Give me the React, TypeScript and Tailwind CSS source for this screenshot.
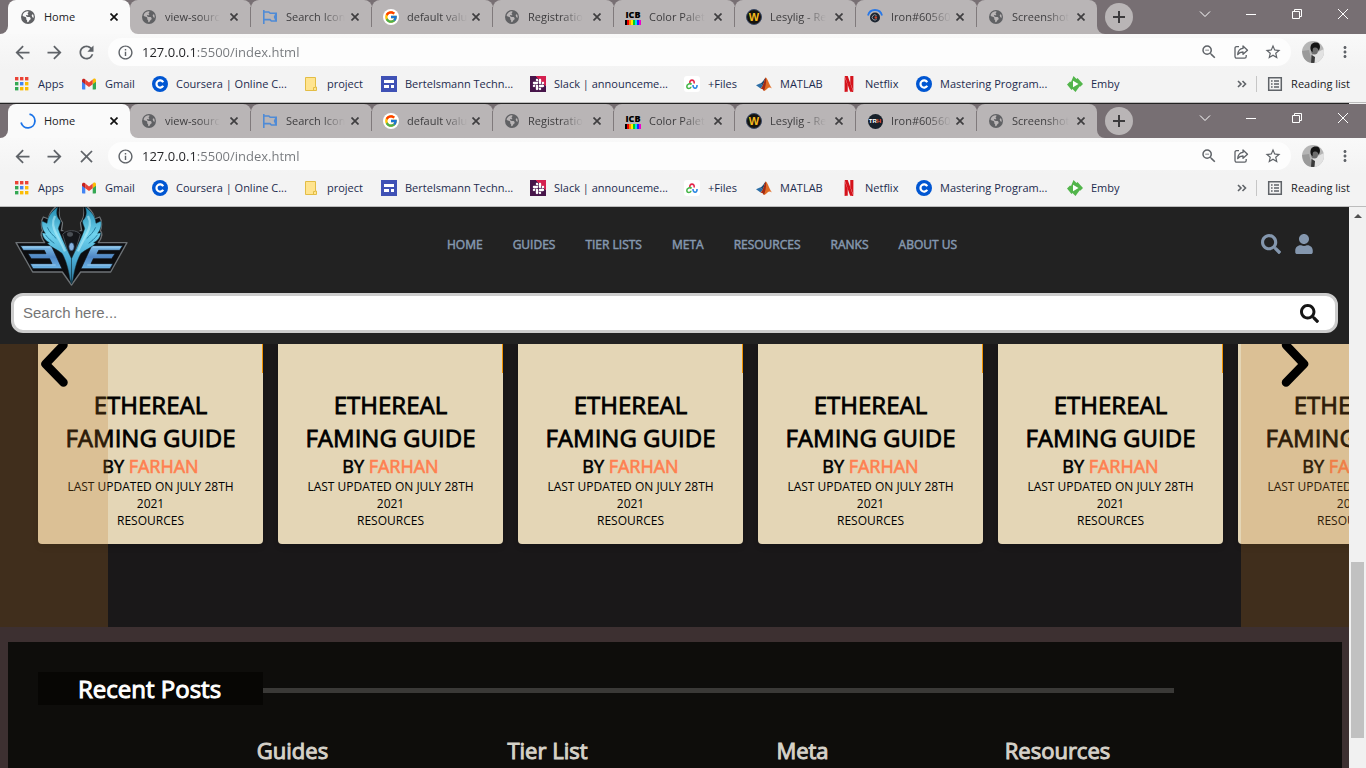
import React from "react";
import { FaEarthAmericas, FaSlack } from "react-icons/fa6";
import { FaSearch, FaUser } from "react-icons/fa";
import { FcGoogle } from "react-icons/fc";
import { SiNetflix } from "react-icons/si";
import { MdArrowBack, MdArrowForward, MdRefresh, MdClose, MdOutlineInfo, MdStarBorder, MdMoreVert, MdOutlineZoomOut } from "react-icons/md";

const Globe = () => <FaEarthAmericas className="size-[14px] text-[#606164]" />;

const Flag = () => (
  <svg viewBox="0 0 16 16" className="size-4" fill="none" stroke="#4f8bd6" strokeWidth="1.6">
    <path d="M1.8 1v14M1.8 3h5l1.400 1.300h6V12H9.400L8 10.600H1.800M14.200 4.300l-1.600 3.800 1.600 3.900" />
  </svg>
);

const Google = () => (
  <span className="flex size-4 items-center justify-center rounded-full bg-white">
    <FcGoogle className="size-[14px]" />
  </span>
);

const ColorBars = () => (
  <span className="flex w-4 flex-col items-center">
    <span className="font-['Open_Sans',sans-serif] text-[9px] leading-[11px] font-extrabold text-black">ICB</span>
    <svg viewBox="0 0 16 5" className="h-[5px] w-4">
      {["#000", "#e00", "#f80", "#fe0", "#0c2", "#0de", "#22f", "#e0c"].map((c, i) => (
        <rect key={c} x={i * 2} width="2" height="5" fill={c} />
      ))}
    </svg>
  </span>
);

const WordBadge = () => (
  <span className="flex size-4 items-center justify-center rounded-full border border-[#3c4a66] bg-[#15130e] font-['Liberation_Sans',sans-serif] text-[11px] font-bold text-[#f3b91f]">
    W
  </span>
);

const BlueEye = () => (
  <svg viewBox="0 0 16 16" className="size-4" fill="none">
    <path d="M1 6.500a7.200 7.200 0 0 1 14 0" stroke="#2878e8" strokeWidth="1.800" />
    <circle cx="8" cy="8.500" r="5" fill="#1c2430" />
    <path d="M9.500 6.500a2.600 2.600 0 1 0 .4 3.400" stroke="#8f959d" strokeWidth="1" />
    <circle cx="8.800" cy="8.500" r="1.300" fill="#c8472c" />
  </svg>
);

const DarkBadge = () => (
  <span className="flex size-[15px] items-center justify-center rounded-full bg-[#16202a] font-['Liberation_Sans',sans-serif] text-[6px] font-bold text-white">
    TR<span className="text-[#e8563a]">H</span>
  </span>
);

const Spinner = () => (
  <svg viewBox="0 0 16 16" className="size-4" fill="none" stroke="#1a73e8" strokeWidth="1.8">
    <path d="M9.5 1.1a7 7 0 1 1-8.4 8.4" />
  </svg>
);

const AppsIcon = () => (
  <svg viewBox="0 0 16 16" className="size-4">
    {["#ea4335", "#ea4335", "#ea4335", "#34a853", "#4285f4", "#fbbc04", "#34a853", "#fbbc04", "#fbbc04"].map((c, i) => (
      <rect key={i} x={1 + (i % 3) * 5} y={1 + Math.floor(i / 3) * 5} width="3.4" height="3.4" fill={c} />
    ))}
  </svg>
);

const GmailIcon = () => (
  <svg viewBox="0 0 16 16" className="size-4">
    <path d="M1 5v7.5c0 .6.4 1 1 1h2.3V7.2z" fill="#4285f4" />
    <path d="M15 5v7.5c0 .6-.4 1-1 1h-2.3V7.2z" fill="#34a853" />
    <path d="M11.7 3.6v4.6L15 5.8V4.2c0-1.4-1.600-2.100-2.700-1.200z" fill="#fbbc04" />
    <path d="M4.300 8.200V3.600L8 6.400l3.700-2.800v4.600L8 11z" fill="#ea4335" />
    <path d="M1 4.200v1.600l3.300 2.400V3.600L3.700 3C2.600 2.200 1 2.800 1 4.200z" fill="#c5221f" />
  </svg>
);

const CourseraIcon = () => (
  <svg viewBox="0 0 16 16" className="size-4" fill="none">
    <circle cx="8" cy="8" r="8" fill="#0056d2" />
    <path d="M11.200 6.200a3.600 3.600 0 1 0 0 3.600" stroke="#fff" strokeWidth="2.200" />
  </svg>
);

const FolderIcon = () => (
  <svg viewBox="0 0 16 16" className="size-4">
    <path d="M2.500 1.500h10v9.500h1v3.500h-11z" fill="#ffe48f" stroke="#e3bd45" />
    <path d="M10.500 14.500v-3h2" fill="none" stroke="#e3bd45" />
  </svg>
);

const GridDoc = () => (
  <svg viewBox="0 0 16 16" className="size-4">
    <rect width="16" height="16" fill="#3f51b5" />
    <path d="M3 4h10v3H3zM3 9h5v3H3zM10 9h3v3h-3z" fill="#fff" />
  </svg>
);

const SlackIcon = () => (
  <span className="flex size-4 items-center justify-center bg-[linear-gradient(225deg,#d4204f_34%,#47154a_34%)]">
    <FaSlack className="size-[13px] text-white" />
  </span>
);

const FilesIcon = () => (
  <svg viewBox="0 0 16 16" className="size-4" fill="none" strokeWidth="1.600">
    <rect width="16" height="16" rx="3" fill="#fff" />
    <path d="M6 7.500C4.500 3 11.500 3 10 7.500" stroke="#e5264a" />
    <path d="M7.500 8.500C6.500 6.800 2.500 8 2.800 10.800c.3 2.200 4 2.200 4.200 0" stroke="#47b649" />
    <path d="M9 9c0 4.500 4.500 4 4 0" stroke="#2b87e3" />
  </svg>
);

const MatlabIcon = () => (
  <svg viewBox="0 0 16 16" className="size-4">
    <path d="M0 9.200l4.500-2L7 9.400l-2.400 3z" fill="#2c6ea6" />
    <path d="M4.500 7.200C7 6.500 8 3 9.800 1.500L7 9.400z" fill="#204a72" />
    <path d="M9.800 1.500c1.700.6 3.300 7 6.200 11-2-1.500-3.500-.8-4.500 0C10 13.800 8.800 14.800 8 15c-.6-1.400-1.600-2.500-3.400-2.600C7.500 11 8.500 3 9.800 1.500z" fill="#e06a23" />
    <path d="M9.800 1.500c.6 2.500.4 7.500-1.800 13.500-.6-1.400-1.600-2.500-3.400-2.600C7.500 11 8.500 3 9.800 1.500z" fill="#a12b16" />
  </svg>
);

const NetflixIcon = () => <SiNetflix className="size-4 text-[#d5121b]" />;

const EmbyIcon = () => (
  <svg viewBox="0 0 16 16" className="size-4">
    <path d="M6.500 0l3 3 1-1L16 8l-2.500 2.500-1 0L8.500 16l-3-3-1 1L0 8.500 3 5.500l1 .500z" fill="#52b54b" />
    <path d="M6 4.700v6.600L11.500 8z" fill="#fff" />
  </svg>
);

const ShareIcon = () => (
  <svg viewBox="0 0 16 16" className="size-4" fill="none" stroke="#5f6368" strokeWidth="1.300" strokeLinejoin="round">
    <path d="M6 2.600H3.600A1.600 1.600 0 0 0 2 4.200v8.400a1.600 1.600 0 0 0 1.600 1.600h8a1.600 1.600 0 0 0 1.600-1.600V11" />
    <path d="M10 2l4.500 4.200L10 10.300V8C7.500 8 6 8.800 4.700 10.600 5 7.300 6.700 4.700 10 4.400z" />
  </svg>
);

const ReadingIcon = () => (
  <svg viewBox="0 0 16 16" className="size-4" fill="none" stroke="#5f6368" strokeWidth="1.500">
    <path d="M1.700 1.700h12.600v12.600H1.700z" />
    <path d="M4 5h1.600M4 8h1.600M4 11h1.600M7 5h5M7 8h5M7 11h5" />
  </svg>
);

const Avatar = () => (
  <svg viewBox="0 0 22 22" className="size-[22px]">
    <defs>
      <clipPath id="face"><circle cx="11" cy="11" r="11" /></clipPath>
    </defs>
    <g clipPath="url(#face)">
      <rect width="22" height="22" fill="#b5b5b5" />
      <path d="M0 10l7-1 3 13H3z" fill="#9a9a9a" />
      <path d="M11 13l5-2 6-3v14H12z" fill="#e2e2e2" />
      <ellipse cx="12.500" cy="9" rx="3.500" ry="4.500" fill="#6d6d6d" />
      <path d="M8.500 8C8 3 11 1 14.500 1.500c4 .5 4.500 5 2 8.500-.3-2.500-1.500-4-4-3.500-2 .3-2 2-1.700 4.500C9.500 10.500 8.700 9.500 8.500 8z" fill="#151515" />
      <path d="M9.500 14l3.500 2-.5 6H9z" fill="#3a3a3a" />
    </g>
  </svg>
);

interface Tab {
  title: string;
  icon: React.ReactNode;
}

const tabsWith = (first: React.ReactNode, iron: React.ReactNode): Tab[] => [
  { title: "Home", icon: first },
  { title: "view-sourc", icon: <Globe /> },
  { title: "Search Icon", icon: <Flag /> },
  { title: "default valu", icon: <Google /> },
  { title: "Registratio", icon: <Globe /> },
  { title: "Color Palet", icon: <ColorBars /> },
  { title: "Lesylig - Re", icon: <WordBadge /> },
  { title: "Iron#60560", icon: iron },
  { title: "Screenshot", icon: <Globe /> },
];

const bookmarks = [
  { label: "Apps", icon: <AppsIcon />, width: "w-[67px]" },
  { label: "Gmail", icon: <GmailIcon />, width: "w-[71px]" },
  { label: "Coursera | Online C...", icon: <CourseraIcon />, width: "w-[151px]" },
  { label: "project", icon: <FolderIcon />, width: "w-[78px]" },
  { label: "Bertelsmann Techn...", icon: <GridDoc />, width: "w-[149px]" },
  { label: "Slack | announceme...", icon: <SlackIcon />, width: "w-[154px]" },
  { label: "+Files", icon: <FilesIcon />, width: "w-[72px]" },
  { label: "MATLAB", icon: <MatlabIcon />, width: "w-[85px]" },
  { label: "Netflix", icon: <NetflixIcon />, width: "w-[75px]" },
  { label: "Mastering Program...", icon: <CourseraIcon />, width: "w-[151px]" },
  { label: "Emby", icon: <EmbyIcon />, width: "w-[54px]" },
];

function BrowserTab({ tab, index, last }: { tab: Tab; index: number; last: boolean }) {
  const active = index === 0;
  const shell = active
    ? "w-[122px] bg-[#776f73]"
    : index === 1
      ? "w-[121px] bg-linear-to-b from-[#776f73] from-50% to-[#f8f8f8] to-50%"
      : last
        ? "w-[120px] bg-linear-to-b from-[#776f73] from-50% to-[#b9b5b6] to-50%"
        : "w-[121px] bg-linear-to-b from-[#776f73] from-50% to-[#b9b5b6] to-50%";
  const face = active
    ? "rounded-t-lg bg-[#fafafa]"
    : index === 1
      ? "rounded-t-lg rounded-bl-lg bg-[#b9b5b6]"
      : "rounded-t-lg bg-[#b9b5b6]";
  return (
    <div className={`h-full min-w-0 ${shell}`}>
      <div className={`flex h-full items-center ${face}`}>
        <button className={`flex h-full min-w-0 flex-1 items-center gap-2 text-left ${active ? "pl-3" : "pl-[11px]"}`}>
          <span className="flex size-4 shrink-0 items-center justify-center">{tab.icon}</span>
          <span className={`whitespace-nowrap ${active ? "text-[#202124]" : "mask-r-from-60% text-[#3d3c3e]"}`}>
            {tab.title}
          </span>
        </button>
        <button aria-label="Close tab" className="mr-2 flex size-4 shrink-0 items-center justify-center">
          <svg viewBox="0 0 8 8" className="size-2" stroke={active ? "#111" : "#3f3e40"} strokeWidth="1.700">
            <path d="M.500.500l7 7M7.500.500l-7 7" />
          </svg>
        </button>
        {!active && !last && <span className="h-5 w-px bg-[#807a7c]" />}
      </div>
    </div>
  );
}

function WindowControls() {
  return (
    <div className="flex h-7 items-center text-white">
      <button aria-label="Search tabs" className="flex w-[46px] justify-center">
        <svg viewBox="0 0 12 12" className="size-3" fill="none" stroke="currentColor"><path d="M1 3.500l5 5 5-5" /></svg>
      </button>
      <button aria-label="Minimize" className="flex w-[46px] justify-center">
        <svg viewBox="0 0 12 12" className="size-3" fill="none" stroke="currentColor"><path d="M1 6.500h10" /></svg>
      </button>
      <button aria-label="Restore" className="flex w-[46px] justify-center">
        <svg viewBox="0 0 12 12" className="size-3" fill="none" stroke="currentColor"><path d="M1.500 3.500h7v7h-7zM3.500 3.500v-2h7v7h-2" /></svg>
      </button>
      <button aria-label="Close window" className="flex w-[46px] justify-center">
        <svg viewBox="0 0 12 12" className="size-3" fill="none" stroke="currentColor"><path d="M1 1l10 10M11 1L1 11" /></svg>
      </button>
    </div>
  );
}

function BrowserChrome({ tabs, loading }: { tabs: Tab[]; loading?: boolean }) {
  return (
    <header className="shrink-0 border-b border-[#bcbcbc] bg-[#f3f3f3] text-[11px] leading-4">
      <div className="flex h-[34px] bg-[#776f73]">
        <div className="w-2 bg-[#fafafa]"><div className="h-full rounded-br-lg bg-[#776f73]" /></div>
        {tabs.map((tab, i) => (
          <BrowserTab key={tab.title} tab={tab} index={i} last={i === tabs.length - 1} />
        ))}
        <div className="flex-1 bg-linear-to-b from-[#776f73] from-50% to-[#b9b5b6] to-50%">
          <div className="flex h-full justify-between rounded-bl-lg bg-[#776f73] pl-2">
            <button aria-label="New tab" className="mt-[3px] flex size-7 items-center justify-center rounded-full bg-[#b9b5b6]">
              <svg viewBox="0 0 12 12" className="size-3" stroke="#3c3b3d" strokeWidth="2"><path d="M6 0v12M0 6h12" /></svg>
            </button>
            <WindowControls />
          </div>
        </div>
      </div>
      <div className="flex h-9 items-center bg-linear-to-b from-[#f9f9f9] to-[#f3f3f3] pl-3 text-[#5f6368]">
        <button aria-label="Back" className="mr-[11px]"><MdArrowBack className="size-[21px]" /></button>
        <button aria-label="Forward" className="mr-[11px]"><MdArrowForward className="size-[21px]" /></button>
        <button aria-label={loading ? "Stop" : "Reload"} className="mr-[11px]">
          {loading ? <MdClose className="size-[21px]" /> : <MdRefresh className="size-[21px]" />}
        </button>
        <div className="flex h-7 flex-1 items-center rounded-full bg-[#fdfdfd] pr-[9px] pl-[9px]">
          <MdOutlineInfo className="size-[17px]" />
          <input
            aria-label="Address"
            defaultValue="127.0.0.1:5500/index.html"
            className="ml-2 min-w-0 flex-1 bg-[linear-gradient(to_right,#202124_54px,#74777b_54px)] bg-clip-text text-[13px] text-transparent outline-none"
          />
          <button aria-label="Zoom" className="mr-[15px]"><MdOutlineZoomOut className="size-[18px]" /></button>
          <button aria-label="Share" className="mr-[15px]"><ShareIcon /></button>
          <button aria-label="Bookmark"><MdStarBorder className="size-[18px]" /></button>
        </div>
        <button aria-label="Profile" className="ml-[11px]"><Avatar /></button>
        <button aria-label="Menu" className="mr-3 ml-3"><MdMoreVert className="size-[18px]" /></button>
      </div>
      <div className="flex h-8 items-center pb-1 pl-[14px]">
        <nav aria-label="Bookmarks" className="flex">
          {bookmarks.map((b) => (
            <a key={b.label} href="#" className={`flex shrink-0 items-center gap-2 whitespace-nowrap text-[#1c2b4e] ${b.width}`}>
              <span className="flex w-4 shrink-0 justify-center">{b.icon}</span>
              {b.label}
            </a>
          ))}
        </nav>
        <div className="ml-auto flex items-center pr-4 text-[#202124]">
          <button aria-label="More bookmarks" className="mr-[9px]">
            <svg viewBox="0 0 10 8" className="h-2 w-[10px]" fill="none" stroke="#5f6368" strokeWidth="1.600"><path d="M1 1l3 3-3 3M5.500 1l3 3-3 3" /></svg>
          </button>
          <span className="mr-[10px] h-4 w-px bg-[#c6c6c6]" />
          <button className="flex items-center gap-2"><ReadingIcon />Reading list</button>
        </div>
      </div>
    </header>
  );
}

const WingE = () => (
  <g>
    <path d="M275 137h93l-9 14h-63l-5 10h54l-10 15h-55l-7 15h66l-9 15h-87z" fill="url(#steel)" stroke="#0d1117" strokeWidth="2" />
    <path d="M278 141h82M262 195h70" stroke="#b7ddf5" strokeWidth="2" />
    <path d="M219 238C224 205 232 178 243 160C258 148 276 142 287 130L281 128C293 122 301 112 303 98L293 100C301 90 306 76 303 63L288 70C286 50 276 36 256 21C261 38 260 50 248 62C246 70 252 76 254 86C248 106 236 128 228 148L214.500 176V252z" fill="url(#flame)" stroke="#11323f" strokeWidth="1.500" />
    <path d="M264 48C275 68 269 84 260 102C252 118 242 134 234 154" fill="none" stroke="#b9f0fb" strokeWidth="7" opacity=".55" />
    <path d="M287 82C281 96 270 106 260 116M293 104C284 116 274 124 266 130" fill="none" stroke="#1c6f93" strokeWidth="2.500" />
  </g>
);

function EveLogo() {
  return (
    <svg viewBox="42 21 348 240" className="h-20 w-[116px]" role="img" aria-label="EVE">
      <defs>
        <linearGradient id="steel" x1="0" y1="0" x2="0" y2="1">
          <stop offset="0" stopColor="#7fc0ea" />
          <stop offset=".5" stopColor="#4f86c4" />
          <stop offset="1" stopColor="#6cb4e6" />
        </linearGradient>
        <linearGradient id="flame" x1="0" y1="0" x2="0" y2="1">
          <stop offset="0" stopColor="#2089b0" />
          <stop offset=".35" stopColor="#6fd3ee" />
          <stop offset=".7" stopColor="#48a9d2" />
          <stop offset="1" stopColor="#2a7196" />
        </linearGradient>
      </defs>
      <path d="M48 128H134C122 112 121 98 128 92C122 78 124 60 130 51L146 57C146 42 156 30 170 18H182C176 36 178 54 188 68L184 92L214 92L245 92L241 68C251 54 253 36 247 18H259C273 30 283 42 283 57L299 51C305 60 307 78 301 92C308 98 307 112 295 128H381L332 216H242L214.500 255L187 216H98z" fill="#0c0d10" stroke="#6d7276" strokeWidth="4" strokeLinejoin="round" />
      <path d="M180 18C177 42 180 56 190 68L190 94H239L239 68C249 56 252 42 249 18z" fill="#222222" />
      <path d="M188 104C196 88 233 88 241 104L214.500 190z" fill="#15171b" stroke="#4a4f55" strokeWidth="3" />
      <ellipse cx="210" cy="103" rx="9" ry="7" fill="#4a4f55" />
      <WingE />
      <g transform="translate(429 0) scale(-1 1)"><WingE /></g>
      <ellipse cx="214.500" cy="140" rx="8" ry="12" fill="#86b3e0" stroke="#1e3550" strokeWidth="2" />
    </svg>
  );
}

const navItems = ["HOME", "GUIDES", "TIER LISTS", "META", "RESOURCES", "RANKS", "ABOUT US"];

function SiteHeader() {
  return (
    <header className="bg-[#222222] px-[11px] pb-[11px]">
      <div className="flex h-[86px] items-center justify-between pr-6 pl-[3px]">
        <a href="#" className="w-[129px] self-start"><EveLogo /></a>
        <nav aria-label="Main" className="flex gap-[30px] pb-[10px] text-[12px] leading-4 text-[#8497ae] [-webkit-text-stroke:0.5px]">
          {navItems.map((n) => <a key={n} href="#">{n}</a>)}
        </nav>
        <div className="flex gap-[13px] pb-3 text-[#8497ae]">
          <button aria-label="Search"><FaSearch className="size-5" /></button>
          <button aria-label="Account"><FaUser className="size-5" /></button>
        </div>
      </div>
      <form className="flex h-10 items-center rounded-xl border-[3px] border-[#cccccc] bg-white pr-4 pl-[9px]">
        <input aria-label="Search" placeholder="Search here..." className="min-w-0 flex-1 font-['Liberation_Sans',sans-serif] text-[15px] outline-none placeholder:text-[#757575]" />
        <button type="button" aria-label="Submit search" className="text-[#151515]"><FaSearch className="size-[19px]" /></button>
      </form>
    </header>
  );
}

function GuideCard() {
  return (
    <article className="relative w-[225px] shrink-0 rounded-b bg-[#e4d6b6] px-5 pt-11 pb-[15px] text-center text-black shadow-md">
      <span className="absolute top-0 right-0 h-[29px] w-px bg-[#f39200]" />
      <h2 className="text-[24px] leading-[33px] [-webkit-text-stroke:0.8px]">ETHEREAL FAMING GUIDE</h2>
      <h3 className="text-[18px] leading-6 [-webkit-text-stroke:0.6px]">BY <a href="#" className="text-[#ff7f50]">FARHAN</a></h3>
      <p className="text-[12px] leading-[17px]">LAST UPDATED ON JULY 28TH 2021</p>
      <p className="text-[12px] leading-[17px]">RESOURCES</p>
    </article>
  );
}

function Carousel() {
  return (
    <section className="relative overflow-hidden bg-[#1a1819] pb-[83px]">
      <div className="flex gap-[15px] pl-[38px]">
        {[0, 1, 2, 3, 4, 5].map((i) => <GuideCard key={i} />)}
      </div>
      <button aria-label="Previous" className="absolute inset-y-0 left-0 flex w-[8%] items-start bg-[#bd7728]/23 pl-[38px]">
        <svg viewBox="0 0 32 44" className="h-11 w-8" fill="none" stroke="#000" strokeWidth="8.500" strokeLinecap="round" strokeLinejoin="round"><path d="M25.500 1L7.500 20 25.500 38.500" /></svg>
      </button>
      <button aria-label="Next" className="absolute inset-y-0 right-0 flex w-[8%] items-start bg-[#bd7728]/23 pl-[38px]">
        <svg viewBox="0 0 32 44" className="h-11 w-8" fill="none" stroke="#000" strokeWidth="8.500" strokeLinecap="round" strokeLinejoin="round"><path d="M7 1l18 19L7 38.500" /></svg>
      </button>
    </section>
  );
}

function RecentPosts() {
  return (
    <section className="mt-[15px] mr-[7px] ml-2 flex-1 bg-[#0e0d0b] px-[30px] pt-[30px]">
      <div className="flex items-center">
        <h2 className="w-[225px] bg-[#070604] pl-10 text-[24px] leading-[33px] text-white [-webkit-text-stroke:1px]">Recent Posts</h2>
        <div className="mt-1 mr-[138px] h-[5px] flex-1 bg-[#3a3937]" />
      </div>
      <div className="mt-[30px] grid grid-cols-4 px-[127px] text-center text-[22px] leading-[31px] text-[#d5d1c8] [-webkit-text-stroke:1px]">
        {["Guides", "Tier List", "Meta", "Resources"].map((t) => <h3 key={t}>{t}</h3>)}
      </div>
    </section>
  );
}

function Scrollbar() {
  return (
    <div aria-hidden="true" className="flex w-[17px] shrink-0 flex-col items-center bg-[#f1f1f1]">
      <div className="flex h-[17px] items-center">
        <svg viewBox="0 0 8 4" className="h-1 w-2"><path d="M4 0l4 4H0z" fill="#505050" /></svg>
      </div>
      <div className="grow-[338]" />
      <div className="w-[13px] grow-[176] bg-[#c1c1c1]" />
      <div className="grow-[30]" />
    </div>
  );
}

export default function App() {
  return (
    <div className="flex h-screen flex-col overflow-hidden bg-[#f1f1f1] font-['Open_Sans','Noto_Sans',sans-serif]">
      <BrowserChrome tabs={tabsWith(<Globe />, <BlueEye />)} />
      <div className="mr-[17px] h-px shrink-0 bg-[#222222]" />
      <BrowserChrome loading tabs={tabsWith(<Spinner />, <DarkBadge />)} />
      <div className="flex min-h-0 flex-1">
        <main className="flex min-w-0 flex-1 flex-col overflow-hidden bg-[#3d3031]">
          <SiteHeader />
          <Carousel />
          <RecentPosts />
        </main>
        <Scrollbar />
      </div>
    </div>
  );
}
